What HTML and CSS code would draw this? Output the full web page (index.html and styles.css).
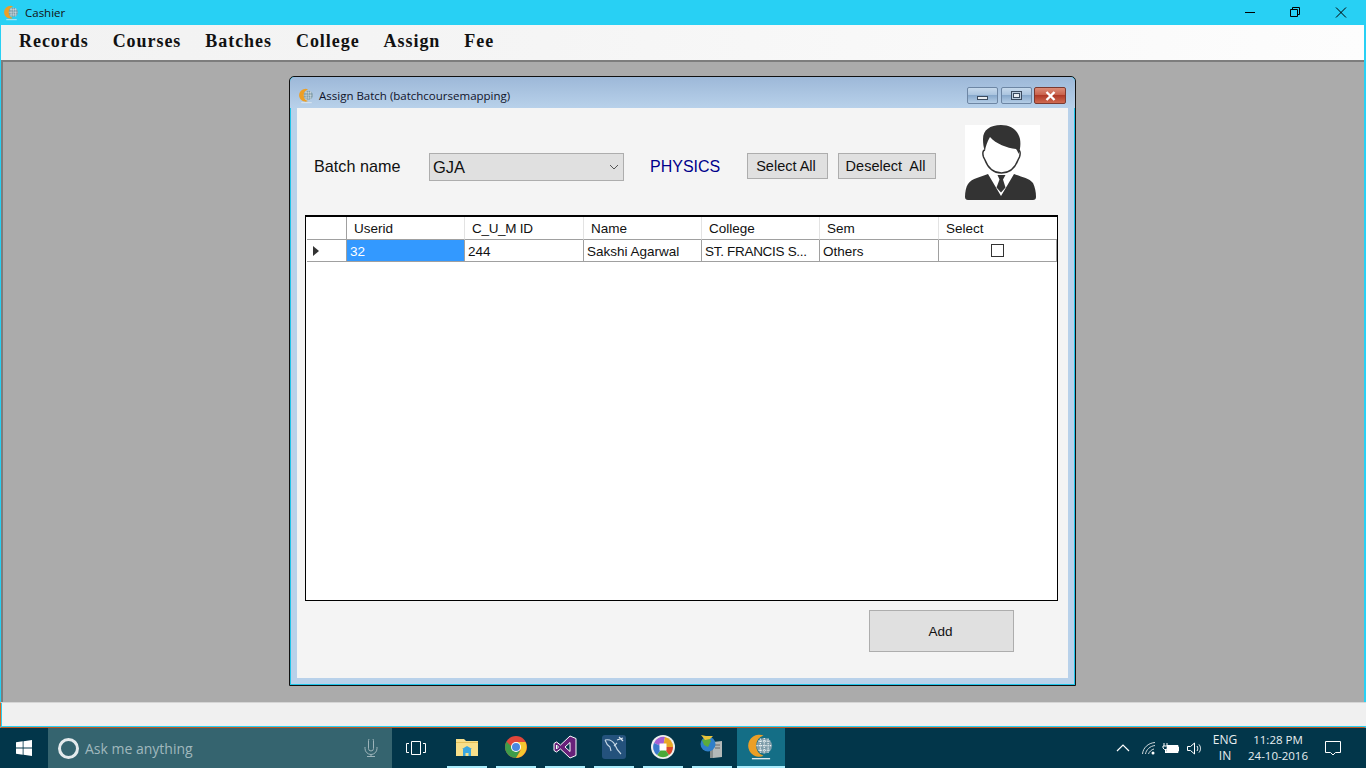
FILE: index.html
```html
<!DOCTYPE html>
<html lang="en">
<head>
<meta charset="utf-8">
<title>Cashier</title>
<link rel="stylesheet" href="styles.css">
</head>
<body>
<svg class="defs" width="0" height="0" aria-hidden="true">
  <symbol id="logo" viewBox="0 0 20 20">
    <path d="M12 1.200A8.500 8.500 0 1 0 12 16.800A8.200 8.200 0 0 1 12 1.200z" fill="#ec9f26"/>
    <circle cx="12.500" cy="9" r="6" fill="#7f9daa"/>
    <path d="M6.500 9h12M12.500 3v12M8 5.500h9M8 12.500h9M9.500 3.500v11M15.500 3.500v11" stroke="#eef3f4" stroke-width=".9" stroke-dasharray="1 .7" fill="none"/>
    <rect x="3" y="18.500" width="14" height="1" fill="#e6eef2"/>
  </symbol>
</svg>
<div class="app">
  <header class="titlebar">
    <svg class="logo"><use href="#logo"/></svg>
    <span class="app-title">Cashier</span>
    <div class="caption">
      <svg class="cap-btn" viewBox="0 0 46 24"><path d="M19 11.500h10" stroke="#000" stroke-width="1"/></svg>
      <svg class="cap-btn" viewBox="0 0 46 24"><path d="M18.500 8.500h7v7h-7zM20.500 8.500v-2h7v7h-2" stroke="#000" fill="none"/></svg>
      <svg class="cap-btn" viewBox="0 0 46 24"><path d="M18 6.500l10 10M28 6.500l-10 10" stroke="#000" fill="none"/></svg>
    </div>
  </header>
  <nav class="menu">
    <span>Records</span><span>Courses</span><span>Batches</span><span>College</span><span>Assign</span><span>Fee</span>
  </nav>
  <main class="mdi">
    <section class="dialog">
      <div class="dlg-title">
        <svg class="logo dlg-logo"><use href="#logo"/></svg>
        <span class="dlg-text">Assign Batch (batchcoursemapping)</span>
        <div class="dlg-btns">
          <span class="wbtn"><i class="g-min"></i></span>
          <span class="wbtn"><i class="g-max"></i></span>
          <span class="wbtn close"><svg width="13" height="10" viewBox="0 0 13 10"><path d="M2.500 1l8 8M10.500 1l-8 8" stroke="#fff" stroke-width="2.400"/></svg></span>
        </div>
      </div>
      <div class="client">
        <div class="form-row">
          <span class="lbl">Batch name</span>
          <div class="combo"><span>GJA</span>
            <svg width="10" height="6" viewBox="0 0 10 6"><path d="M1 1l4 4 4-4" fill="none" stroke="#555"/></svg>
          </div>
          <span class="course">PHYSICS</span>
          <button class="btn sel">Select All</button>
          <button class="btn desel">Deselect&nbsp; All</button>
          <svg class="avatar" viewBox="0 0 75 75">
            <rect width="75" height="75" fill="#fff"/>
            <path d="M20 25c-2.500 0-2.500 4-1.500 7l1.500 3c3 8 9 13 16.500 13s13.500-5 16.500-13l1.500-3c1-3 1-7-1.500-7" fill="#fff" stroke="#333" stroke-width="1.500"/>
            <path d="M36 0c-11 0-18 5-18 14 0 4 .5 9 2 12 .5-4 2-9 5-14 6 7 17 11 26 12 1 1 2 3 2.500 5 1.500-4 2.500-9 1.500-15C53 5 46 0 36 0z" fill="#333"/>
            <path d="M23 49L36 71l13-22c7 3 15 4 19 9 2 4 3 9 3 14 0 2-1 3-3 3H3c-2 0-3-1-3-3 0-5 1-10 3-13 4-6 13-7 20-10z" fill="#333"/>
            <path d="M32.500 50h8l-2.500 4.500 2.500 8-4.500 5-4.500-5 3-8z" fill="#333"/>
          </svg>
        </div>
        <div class="grid">
          <div class="cell hd blank"></div>
          <div class="cell hd">Userid</div>
          <div class="cell hd tight">C_U_M ID</div>
          <div class="cell hd">Name</div>
          <div class="cell hd">College</div>
          <div class="cell hd">Sem</div>
          <div class="cell hd last">Select</div>
          <div class="cell rowhd"><svg width="6" height="10" viewBox="0 0 6 10"><path d="M0 0l6 5-6 5z" fill="#333"/></svg></div>
          <div class="cell td active">32</div>
          <div class="cell td">244</div>
          <div class="cell td">Sakshi Agarwal</div>
          <div class="cell td tight">ST. FRANCIS S...</div>
          <div class="cell td">Others</div>
          <div class="cell td chk"><span class="box"></span></div>
        </div>
        <div class="foot"><button class="btn add">Add</button></div>
      </div>
    </section>
  </main>
  <div class="status"></div>
</div>
<footer class="taskbar">
  <div class="start"><svg width="16" height="16" viewBox="0 0 16 16"><path d="M0 2.300l6.700-1v6.300H0zM7.500 1.200L16 0v7.600H7.500zM0 8.400h6.700v6.300l-6.700-1zM7.500 8.400H16V16l-8.500-1.200z" fill="#fff"/></svg></div>
  <div class="search">
    <span class="ring"></span>
    <span class="ask">Ask me anything</span>
    <svg class="mic" width="14" height="18" viewBox="0 0 14 18"><path d="M4.500 1.500a2.500 2.500 0 0 1 5 0v8a2.500 2.500 0 0 1-5 0zM1 8v1.500a6 6 0 0 0 12 0V8M7 15.500V17M3 17.500h8" fill="none" stroke="#9db4ba"/></svg>
  </div>
  <div class="tv"><svg width="20" height="14" viewBox="0 0 20 14"><path d="M5.500.5h9v13h-9zM3 2.500H.5v9H3M17 2.500h2.500v9H17" fill="none" stroke="#fff"/></svg></div>
  <div class="tasks">
    <div class="task on"><svg width="22" height="18" viewBox="0 0 22 18"><path d="M0 1h8l2 2h12v15H0z" fill="#f7df8a"/><path d="M0 4h22v1H0z" fill="#e3c05a"/><path d="M7 11h8v7h-2.500v-3h-3v3H7z" fill="#3aa6e0"/><path d="M6 11l5-3 5 3z" fill="#3aa6e0"/></svg></div>
    <div class="task on"><svg width="22" height="22" viewBox="0 0 22 22"><circle cx="11" cy="11" r="11" fill="#e0463a"/><path d="M1.500 5.500A11 11 0 0 0 11 22l4-7-4 0z" fill="#3f9d4a"/><path d="M11 6h9.500A11 11 0 0 1 11 22l4.500-7.500z" fill="#f5c62f"/><circle cx="11" cy="11" r="5" fill="#fff"/><circle cx="11" cy="11" r="4" fill="#4a88e0"/></svg></div>
    <div class="task on"><svg width="24" height="24" viewBox="0 0 24 24"><path d="M17 1l6 2.500v17L17 23 7.500 14 3.500 17 1 15.500v-7L3.500 7l4 3zM17 7.500L12 12l5 4.500zM3.500 10v4l2-2z" fill="#68217a" stroke="#fff" stroke-width="1"/></svg></div>
    <div class="task on"><svg width="24" height="24" viewBox="0 0 24 24"><rect width="24" height="24" rx="3" fill="#24527c"/><path d="M3 5c5-1 8 1 10 5 1 3 2 5 6 9M3 5c1 3 2 5 5 7l1 4M15 8l-3 3" fill="none" stroke="#c6d8e6" stroke-width="1.100"/><path d="M17 2l4 4M15 5l6-2" stroke="#dbe6ee" stroke-width="1.200" fill="none"/></svg></div>
    <div class="task on"><svg width="24" height="24" viewBox="0 0 24 24"><circle cx="12" cy="12" r="12" fill="#eef0ee"/><path d="M12 12L3 8A10 10 0 0 1 14 2z" fill="#a560d4"/><path d="M12 12L14 2A10 10 0 0 1 22 12z" fill="#e9a825"/><path d="M12 12L22 12A10 10 0 0 1 18 20z" fill="#d9482c"/><path d="M12 12L18 20A10 10 0 0 1 6 20z" fill="#4aa838"/><path d="M12 12L6 20A10 10 0 0 1 3 8z" fill="#3a78cc"/><rect x="8.500" y="8.500" width="7" height="7" fill="#fff"/></svg></div>
    <div class="task on"><svg width="24" height="24" viewBox="0 0 24 24"><path d="M13 7l9-1v16l-9 1z" fill="#b4b9b8"/><path d="M13 7h-3v16h3z" fill="#8a908f"/><path d="M15 10h5M15 13h5" stroke="#666"/><circle cx="8" cy="9" r="7.500" fill="#2f7fc9"/><path d="M2 5l6-3 3 4-3 6-4-2z" fill="#5cab3c"/><path d="M1 0l5 1 7 0-3 3-5 1z" fill="#e8c43a"/></svg></div>
    <div class="task active"><svg width="26" height="26" viewBox="0 0 20 20"><use href="#logo"/></svg></div>
  </div>
  <div class="tray">
    <svg width="14" height="8" viewBox="0 0 14 8"><path d="M1 7l6-6 6 6" fill="none" stroke="#fff" stroke-width="1.200"/></svg>
    <svg class="t-wifi" width="14" height="13" viewBox="0 0 14 13"><path d="M.5 12C1 6 6 1 13 .5M3.500 12C4 8 8 4 13 3.500M6.500 12C7 10 9.500 7.500 12 7" fill="none" stroke="#cfd8dc"/><circle cx="11" cy="11" r="1.500" fill="#fff"/></svg>
    <svg class="t-bat" width="17" height="11" viewBox="0 0 17 11"><path d="M2 0v3M5 0v3M1 3h5v2l-1.500 1.500h-2L1 5zM3.500 6.500V10" stroke="#fff" fill="none"/><path d="M5 2.500h11v7H4" fill="#fff" stroke="#fff"/><rect x="15" y="4" width="2" height="4" fill="#fff"/></svg>
    <svg class="t-vol" width="16" height="13" viewBox="0 0 16 13"><path d="M.5 4.500h3L7.500 1v11l-4-3.500h-3zM10 4c1 1.500 1 3.500 0 5M12 2.500c2 2.500 2 5.500 0 8" fill="none" stroke="#fff"/></svg>
    <div class="lang"><span>ENG</span><span>IN</span></div>
    <div class="clock"><span>11:28 PM</span><span>24-10-2016</span></div>
    <svg class="t-note" width="16" height="15" viewBox="0 0 16 15"><path d="M.5.500h15v11h-5l-2.500 2.500-2.500-2.500h-5z" fill="none" stroke="#fff"/></svg>
  </div>
</footer>
</body>
</html>
```

FILE: styles.css
```css
* { box-sizing: border-box; }
html, body { margin: 0; height: 768px; overflow: hidden; }
body { display: flex; flex-direction: column; width: 1366px; font-family: "Liberation Sans", Arial, sans-serif; color: #000; background: #02364a; }
.defs { position: absolute; }
.app { height: 728px; display: flex; flex-direction: column; border-left: 1px solid #28d0f4; border-right: 2px solid #28d0f4; border-bottom: 1px solid #c85a20; }
.titlebar { height: 25px; margin: 0 -2px 0 -1px; background: #28d0f4; display: flex; align-items: center; flex: none; }
.logo { width: 15px; height: 16px; margin-left: 4px; flex: none; }
.app-title { margin-left: 6px; font: 11.5px "Open Sans", sans-serif; color: #111; }
.caption { margin-left: auto; display: flex; margin-right: 2px; }
.cap-btn { width: 46px; height: 24px; }
.menu { height: 35px; flex: none; display: flex; gap: 24px; padding: 5px 0 0 18px; background: linear-gradient(90deg, #f2f2f2 0, #f5f5f5 40%, #fdfdfd 100%); font: bold 18px/22px "Liberation Serif", serif; letter-spacing: .95px; color: #111; }
.mdi { flex: 1; position: relative; background: #ababab; border-top: 2px solid #7d7d7d; border-left: 2px solid #7d7d7d; }
.dialog { position: absolute; left: 286px; top: 14px; width: 787px; height: 610px; border: 1px solid #111; border-radius: 5px 5px 0 0; background: #b8d1ea; padding: 0 7px 7px 7px; box-shadow: inset 0 0 0 1px #1fc4e8; display: flex; flex-direction: column; }
.dlg-title { height: 31px; flex: none; margin: 0 -7px; padding: 6px 9px 0 9px; display: flex; align-items: center; background: linear-gradient(#9db8d8, #b8d1ea); border-radius: 5px 5px 0 0; }
.dlg-logo { margin-left: 0; }
.dlg-text { margin-left: 5px; font: 11.5px "Open Sans", sans-serif; color: #10132a; }
.dlg-btns { margin-left: auto; display: flex; gap: 3px; }
.wbtn { width: 31px; height: 17px; border: 1px solid #6d86a4; border-radius: 2px; background: linear-gradient(#c6d9ec 0, #a9c3de 48%, #88a9cc 50%, #b4cde6 100%); display: flex; align-items: center; justify-content: center; }
.close { width: 32px; margin-left: -1px; background: linear-gradient(#dc8c78 0, #c8604a 48%, #b03a28 50%, #cf6a50 100%); border-color: #7b3a30; }
.g-min { width: 11px; height: 4px; margin-top: 5px; background: #e8edf2; border: 1px solid #3a4a5e; }
.g-max { width: 11px; height: 9px; background: #e8edf2; border: 1px solid #3a4a5e; box-shadow: inset 0 0 0 1px #b9cbdd, inset 0 0 0 2px #3a4a5e; }
.client { flex: 1; background: #f4f4f4; padding: 17px 10px 0 8px; display: flex; flex-direction: column; }
.form-row { height: 90px; flex: none; display: flex; align-items: flex-start; }
.lbl { margin: 31px 0 0 9px; width: 115px; font-size: 16.200px; line-height: 20px; color: #111; }
.combo { width: 195px; height: 28px; margin-top: 28px; background: #e0e0e0; border: 1px solid #adadad; padding: 0 4px 0 3px; display: flex; align-items: center; justify-content: space-between; font-size: 16.500px; color: #111; }
.course { margin: 32px 0 0 26px; width: 97px; font-size: 16px; line-height: 20px; color: #00008b; }
.btn { background: #e0e0e0; border: 1px solid #adadad; border-radius: 0; font-family: "Liberation Sans", Arial, sans-serif; color: #111; padding: 0; }
.sel { width: 81px; height: 26px; margin-top: 28px; font-size: 14.500px; padding-right: 3px; }
.desel { width: 98px; height: 26px; margin: 28px 0 0 10px; font-size: 14.500px; padding-right: 3px; }
.avatar { width: 75px; height: 75px; margin-left: 29px; display: block; }
.grid { height: 386px; flex: none; border: 1px solid #000; border-top-width: 2px; background: #fff; padding: 0 0 0 1px; display: grid; grid-template-columns: 40px 118px 119px 118px 118px 119px 118px; grid-template-rows: 23px 22px; align-content: start; font-size: 13.500px; color: #111; }
.cell { display: flex; align-items: center; border-right: 1px solid #a0a0a0; border-bottom: 1px solid #a0a0a0; white-space: nowrap; overflow: hidden; }
.hd { padding: 0 0 0 7px; border-right-color: #e3e3e3; }
.blank { border-right-color: #a0a0a0; }
.rowhd { padding-left: 6px; }
.td { padding: 1px 0 0 3px; }
.tight { letter-spacing: -.3px; }
.active { background: #3399ff; color: #fff; }
.last { border-right: 0; }
.chk { justify-content: center; padding: 0; }
.box { width: 13px; height: 13px; border: 1px solid #333; background: #fff; margin-bottom: 1px; }
.foot { flex: 1; display: flex; justify-content: flex-end; padding: 9px 44px 0 0; }
.add { width: 145px; height: 42px; font-size: 13.500px; padding-right: 2px; }
.status { height: 25px; flex: none; background: #f0f0f0; border-top: 1px solid #d6d6d6; border-bottom: 1px solid #28d0f4; border-left: 1px solid #d8641e; box-shadow: inset 1px 0 0 #28d0f4; margin: 0 -2px 0 -1px; }
.taskbar { height: 40px; flex: none; display: flex; background: #02364a; color: #fff; }
.start { width: 48px; display: flex; align-items: center; justify-content: center; }
.search { width: 344px; background: #35646f; display: flex; align-items: center; padding-left: 10px; }
.ring { width: 21px; height: 21px; border-radius: 50%; border: 3px solid #e4eaec; flex: none; }
.ask { margin-left: 6px; font: 14px "Open Sans", sans-serif; color: #a0b8bd; }
.mic { margin-left: auto; margin-right: 14px; }
.tv { width: 48px; display: flex; align-items: center; justify-content: center; }
.tasks { display: flex; margin-left: 7px; }
.task { width: 40px; margin-right: 9px; display: flex; align-items: center; justify-content: center; border-bottom: 2px solid #a9ecfc; }
.task.active { width: 48px; margin: 0 0 0 -4px; background: #146e86; }
.tray { margin-left: auto; display: flex; align-items: center; padding-right: 25px; }
.t-wifi { margin-left: 12px; }
.t-bat { margin-left: 6px; }
.t-vol { margin-left: 8px; }
.lang { margin-left: 8px; width: 28px; display: flex; flex-direction: column; align-items: center; font: 12px/16px "Open Sans", sans-serif; color: #e8eef0; }
.clock { margin-left: 5px; width: 68px; display: flex; flex-direction: column; align-items: center; font: 11.500px/16px "Open Sans", sans-serif; color: #e8eef0; }
.t-note { margin-left: 13px; }
```
